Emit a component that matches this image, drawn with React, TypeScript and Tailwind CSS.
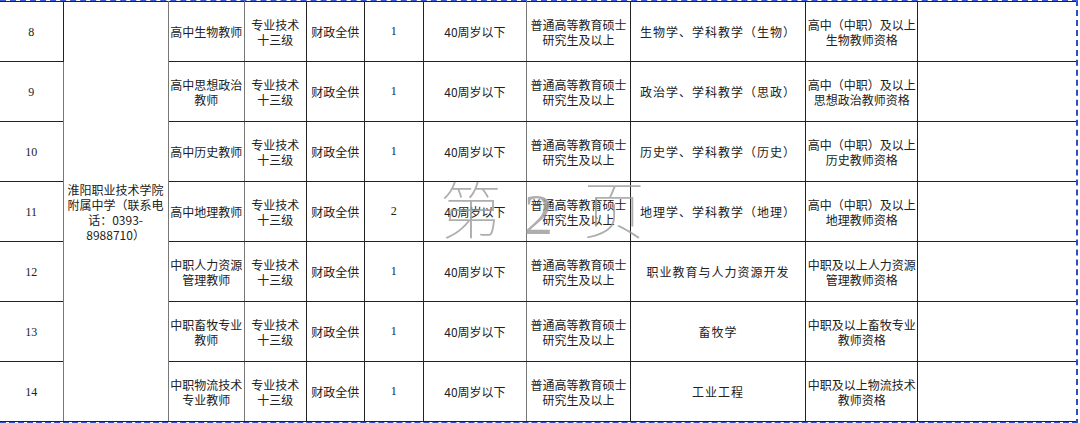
const rows = [
  { no: '8', post: ['高中生物教师'], major: '生物学、学科教学（生物）', cert: ['高中（中职）及以上', '生物教师资格'], count: '1' },
  { no: '9', post: ['高中思想政治', '教师'], major: '政治学、学科教学（思政）', cert: ['高中（中职）及以上', '思想政治教师资格'], count: '1' },
  { no: '10', post: ['高中历史教师'], major: '历史学、学科教学（历史）', cert: ['高中（中职）及以上', '历史教师资格'], count: '1' },
  { no: '11', post: ['高中地理教师'], major: '地理学、学科教学（地理）', cert: ['高中（中职）及以上', '地理教师资格'], count: '2' },
  { no: '12', post: ['中职人力资源', '管理教师'], major: '职业教育与人力资源开发', cert: ['中职及以上人力资源', '管理教师资格'], count: '1' },
  { no: '13', post: ['中职畜牧专业', '教师'], major: '畜牧学', cert: ['中职及以上畜牧专业', '教师资格'], count: '1' },
  { no: '14', post: ['中职物流技术', '专业教师'], major: '工业工程', cert: ['中职及以上物流技术', '教师资格'], count: '1' },
]

const widths = [63, 105, 76, 62, 58, 59, 103, 104, 175, 112, 158]

const base = 'text-center align-middle px-0 text-[12px] leading-[15px] text-[#222] whitespace-nowrap'
const cell = 'border border-[#222] ' + base
const grayCell = 'border border-y-[#222] border-x-[#777] ' + base

function Lines({ items }: { items: string[] }) {
  return (
    <>
      {items.map((t, i) => (
        <div key={i}>{t}</div>
      ))}
    </>
  )
}

export default function App() {
  return (
    <div className="relative w-[1080px] h-[423px] bg-white overflow-hidden font-['Noto_Sans_CJK_SC',sans-serif]">
      <div className="w-[1078px] border-t-2 border-dashed border-t-[#3b5bd6] border-r-2 border-r-[#2d4fc4] border-b-[3px] border-b-[#2d4fc4]">
        <table className="table-fixed border-collapse w-[1076px] -mt-px">
          <colgroup>
            {widths.map((w, i) => (
              <col key={i} style={{ width: w }} />
            ))}
          </colgroup>
          <tbody>
            {rows.map((r, i) => (
              <tr key={r.no} className="h-[60px]">
                <td className="border border-[#222] border-l-0 text-center align-middle text-[12px] text-[#222] font-['Liberation_Serif',serif]">{r.no}</td>
                {i === 0 && (
                  <td rowSpan={7} className={grayCell}>
                    <Lines items={['淮阳职业技术学院', '附属中学（联系电', '话：0393-', '8988710）']} />
                  </td>
                )}
                <td className={grayCell}>
                  <Lines items={r.post} />
                </td>
                <td className={cell}>
                  <Lines items={['专业技术', '十三级']} />
                </td>
                <td className={cell}>财政全供</td>
                <td className={cell + " font-['Liberation_Serif',serif]"}>{r.count}</td>
                <td className={grayCell}>40周岁以下</td>
                <td className={cell}>
                  <Lines items={['普通高等教育硕士', '研究生及以上']} />
                </td>
                <td className={cell + ' tracking-[1px]'}>{r.major}</td>
                <td className={cell}>
                  <Lines items={r.cert} />
                </td>
                <td className="border border-[#222] border-r-0"></td>
              </tr>
            ))}
          </tbody>
        </table>
      </div>
      <div className="absolute left-[440px] top-[182px] flex items-baseline text-[62px] leading-none text-[#9a9a9a]/80 font-['Liberation_Serif','Noto_Sans_CJK_SC',serif] font-thin pointer-events-none">
        <span>第</span>
        <span className="ml-[22px] text-[58px]">2</span>
        <span className="ml-[30px]">页</span>
      </div>
    </div>
  )
}
